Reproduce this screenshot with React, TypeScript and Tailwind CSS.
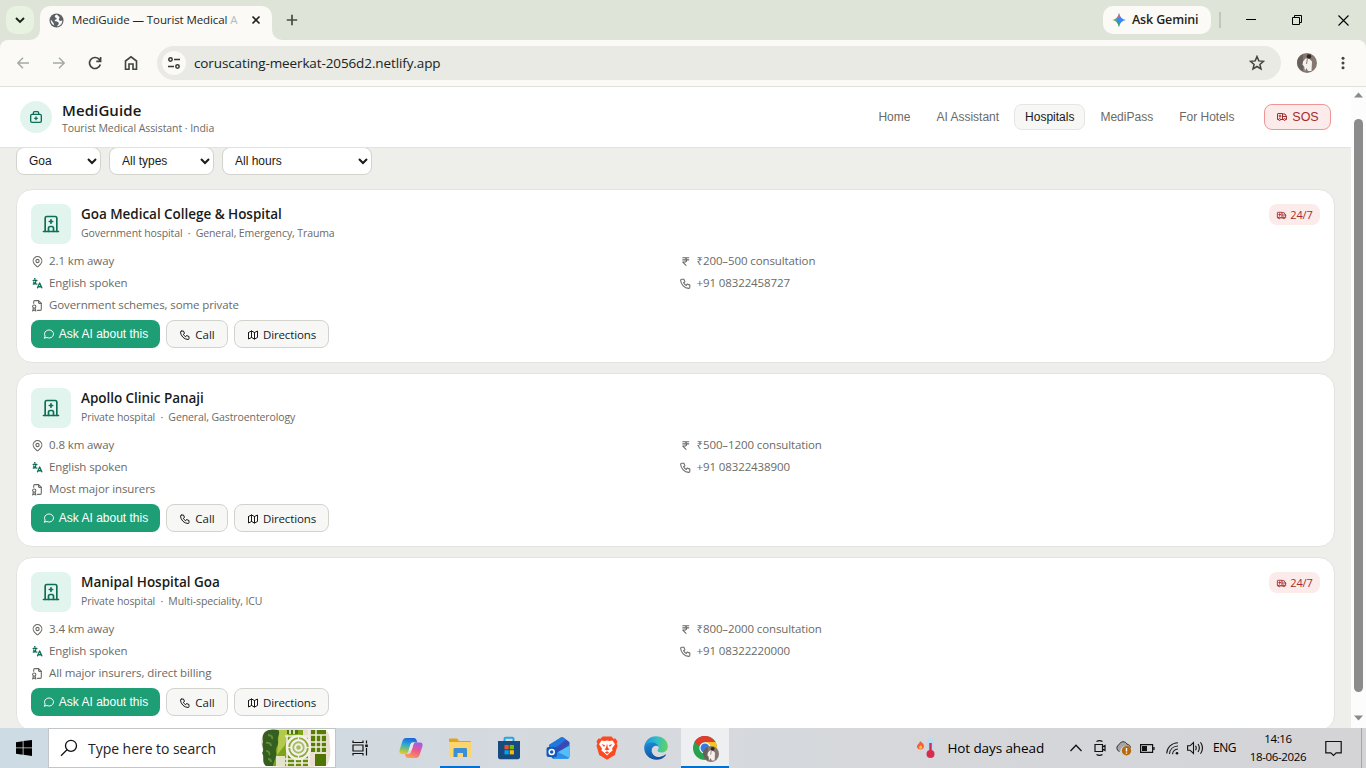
import type { ReactNode } from "react";
import {
  TbAmbulance,
  TbBuildingHospital,
  TbCurrencyRupee,
  TbFileCertificate,
  TbFirstAidKit,
  TbMap,
  TbMapPin,
  TbMessageCircle,
  TbPhone
} from "react-icons/tb";

interface Hospital {
  name: string;
  kind: string;
  specialties: string;
  distance: string;
  fee: string;
  phone: string;
  insurance: string;
  open24: boolean;
}

const hospitals: Hospital[] = [
  {
    name: "Goa Medical College & Hospital",
    kind: "Government hospital",
    specialties: "General, Emergency, Trauma",
    distance: "2.1 km away",
    fee: "₹200–500 consultation",
    phone: "+91 08322458727",
    insurance: "Government schemes, some private",
    open24: true
  },
  {
    name: "Apollo Clinic Panaji",
    kind: "Private hospital",
    specialties: "General, Gastroenterology",
    distance: "0.8 km away",
    fee: "₹500–1200 consultation",
    phone: "+91 08322438900",
    insurance: "Most major insurers",
    open24: false
  },
  {
    name: "Manipal Hospital Goa",
    kind: "Private hospital",
    specialties: "Multi-speciality, ICU",
    distance: "3.4 km away",
    fee: "₹800–2000 consultation",
    phone: "+91 08322220000",
    insurance: "All major insurers, direct billing",
    open24: true
  }
];

const navItems = ["Home", "AI Assistant", "Hospitals", "MediPass", "For Hotels"];

const LanguageIcon = () => (
  <svg
    viewBox="0 0 24 24"
    fill="none"
    stroke="currentColor"
    strokeWidth="2.4"
    strokeLinecap="round"
    strokeLinejoin="round"
    className="h-[13px] w-[13px] text-[#0f6e56]"
  >
    <path d="M9 6.4c0 4.4-2.2 6.6-5 6.6M4 6.4h7M5 9c0 2.1 2.3 3.9 6 4M12 20l4-9 4 9M19.1 18h-6.2M6.7 3l.8.6" />
  </svg>
);

const Avatar = ({ className }: { className: string }) => (
  <svg viewBox="0 0 20 20" className={className}>
    <circle cx="10" cy="10" r="10" fill="#857870" />
    <path d="M0 10a10 10 0 0 1 6-9v17a10 10 0 0 1-6-8Z" fill="#68605b" />
    <path d="M6 8.500 8.500 5.500h3.500l3 3-.5 9.500H11l-1.500-3-1.500 3-1-5-1.500-1Z" fill="#f3f1ee" />
    <circle cx="12" cy="3.500" r="2.300" fill="#342622" />
    <path d="M10.500 5.500 9.500 11" stroke="#a08a7e" strokeWidth="1.200" />
  </svg>
);

const TabStrip = () => (
  <div className="flex h-10 shrink-0 bg-[#dee4d8]">
    <div className="flex w-[30px] justify-end pl-1.5 pt-1.5">
      <button className="flex h-7 w-7 shrink-0 -mr-1 items-center justify-center rounded-[10px] bg-[#e7f3e0]">
        <svg viewBox="0 0 12 12" className="h-3 w-3" fill="none" stroke="#1c211a" strokeWidth="1.9">
          <path d="m2 4 4 4 4-4" />
        </svg>
      </button>
    </div>
    <svg viewBox="0 0 10 10" className="h-2.5 w-2.5 self-end" fill="#fbfaf6">
      <path d="M10 0v10H0A10 10 0 0 0 10 0Z" />
    </svg>
    <div className="mt-1.5 flex h-[34px] w-[232px] items-center rounded-t-[10px] bg-[#fbfaf6] pb-1.5">
      <svg viewBox="0 0 16 16" className="ml-[9px] h-[15px] w-[15px] shrink-0">
        <circle cx="8" cy="8" r="7.500" fill="#5b6066" />
        <path d="M8.500 1.500c-2 .4-2.700 1.600-2.100 2.700.5 1 1.800.6 1.800 1.800 0 1-1.400.7-1.900 1.500-.5.700 0 1.300 1 1.400 1.600.2 3.400.8 3.100 2.500-.2 1.200-1.500 1.200-1.700 2.800 3-.4 5.500-3 5.500-6.300-1.500.8-3.300.8-3.700-.6-.3-1.200 1-1.700.7-2.800-.3-1-1.500-1.300-2.700-3ZM1.800 7c-.2 2.600 1.100 5 3.400 6.200.3-1.500-.2-2.400-1-3.300C3.200 8.900 2.700 8 1.800 7Z" fill="#fbfaf6" />
      </svg>
      <div className="ml-2 w-[168px] whitespace-nowrap text-[11.500px] tracking-[-0.1px] text-[#24271f]">
        MediGuide — Tourist Medical <span className="text-[#b9bab5]">A</span>
      </div>
      <svg viewBox="0 0 10 10" className="ml-[11px] h-2.5 w-2.5 shrink-0" stroke="#23261f" strokeWidth="1.700">
        <path d="m1.500 1.500 7 7M8.500 1.500l-7 7" />
      </svg>
    </div>
    <svg viewBox="0 0 10 10" className="h-2.5 w-2.5 self-end" fill="#fbfaf6">
      <path d="M0 0v10h10A10 10 0 0 1 0 0Z" />
    </svg>
    <svg viewBox="0 0 12 12" className="ml-1 mt-3.5 h-3 w-3" stroke="#464b42" strokeWidth="1.700">
      <path d="M6 .8v10.400M.8 6h10.400" />
    </svg>
    <div className="ml-auto mr-[17px] flex items-start">
      <div className="mt-1.5 flex h-7 w-[108px] items-center rounded-[10px] bg-[#fbfaf6] pl-[9px]">
        <svg viewBox="0 0 14 14" className="h-3.5 w-3.5">
          <defs>
            <linearGradient id="gemini" x1="0" y1="0.300" x2="1" y2="0.500">
              <stop offset="0" stopColor="#f6c11a" />
              <stop offset="0.300" stopColor="#55a878" />
              <stop offset="0.450" stopColor="#3f86f6" />
              <stop offset="1" stopColor="#3186ff" />
            </linearGradient>
          </defs>
          <path d="M7 0c.8 4 3 6.200 7 7-4 .8-6.200 3-7 7-.8-4-3-6.200-7-7 4-.8 6.200-3 7-7Z" fill="url(#gemini)" />
          <path d="M7 0c.3 2 1 3.500 2 4.600L5.500 5.300C6.300 4 6.700 2.500 7 0Z" fill="#ee5a52" />
          <path d="M7 14c-.4-2-1-3.500-2-4.600l2.500-.4C7.500 11 7.400 12.500 7 14Z" fill="#35a86a" />
        </svg>
        <span className="ml-[6px] text-[12.500px] font-semibold tracking-[-0.150px] text-[#1f231c]">Ask Gemini</span>
      </div>
      <div className="ml-2 mt-3 h-4 w-0.5 bg-[#bdcab6]" />
      <svg viewBox="0 0 10 10" className="ml-[25px] mt-[15px] h-2.5 w-2.5" stroke="#000">
        <path d="M0 4.500h10" />
      </svg>
      <svg viewBox="0 0 10 10" className="ml-9 mt-[15px] h-2.5 w-2.5" fill="none" stroke="#000">
        <path d="M.5 2.500h7v7h-7zM2.500 2.500v-2h7v7h-2" />
      </svg>
      <svg viewBox="0 0 11 11" className="ml-9 mt-[15px] h-[11px] w-[11px]" stroke="#000" strokeWidth="1.100">
        <path d="m.5.500 10 10M10.500.500l-10 10" />
      </svg>
    </div>
  </div>
);

const Toolbar = () => (
  <div className="shrink-0 bg-[#dee4d8]">
    <div className="flex h-[47px] items-center rounded-t-lg border-b border-[#dfe2da] bg-[#fbfaf6] pl-[17px]">
      <svg viewBox="0 0 12 12" className="h-3 w-3" fill="none" stroke="#a6a9a2" strokeWidth="1.400">
        <path d="M12 6H1M6 .7.8 6 6 11.300" />
      </svg>
      <svg viewBox="0 0 12 12" className="ml-6 h-3 w-3" fill="none" stroke="#a6a9a2" strokeWidth="1.400">
        <path d="M0 6h11M6 .7 11.200 6 6 11.300" />
      </svg>
      <svg viewBox="0 0 14 14" className="ml-[23px] h-3.5 w-3.5" fill="none" stroke="#40453d" strokeWidth="1.700">
        <path d="M12.300 8.500A5.500 5.500 0 1 1 11 3.200l1.500 1.500M12.600 1v4.300H8.300" />
      </svg>
      <svg viewBox="0 0 14 16" className="ml-[22px] h-4 w-3.5" fill="none" stroke="#40453d" strokeWidth="1.600">
        <path d="M1.500 14.200V6L7 1.800 12.500 6v8.200H9V9H5v5.200Z" />
      </svg>
      <div className="ml-[19px] flex h-[34px] w-[1124px] items-center rounded-full bg-[#e8eae3] pl-[5px] pr-4">
        <div className="flex h-6 w-6 items-center justify-center rounded-full bg-[#fbfaf6]">
          <svg viewBox="0 0 14 14" className="h-3.5 w-3.5" fill="none" stroke="#353a32" strokeWidth="1.500">
            <circle cx="3.500" cy="3.500" r="1.700" />
            <path d="M7 3.500h6M1 10.500h6" />
            <circle cx="10.500" cy="10.500" r="1.700" />
          </svg>
        </div>
        <span className="ml-2 text-[13.500px] tracking-[-0.110px] text-[#20231d]">coruscating-meerkat-2056d2.netlify.app</span>
        <svg viewBox="0 0 16 16" className="ml-auto h-4 w-4" fill="none" stroke="#40453d" strokeWidth="1.500">
          <path d="m8 1.500 1.800 4.400 4.700.4-3.600 3.100 1.100 4.600L8 11.500 4 14l1.100-4.600-3.600-3.100 4.700-.4Z" />
        </svg>
      </div>
      <Avatar className="ml-4 h-5 w-5" />
      <svg viewBox="0 0 4 14" className="ml-6 h-3.5 w-1" fill="#40453d">
        <circle cx="2" cy="2.300" r="1.500" />
        <circle cx="2" cy="7" r="1.500" />
        <circle cx="2" cy="11.700" r="1.500" />
      </svg>
    </div>
  </div>
);

const Header = () => (
  <header className="relative z-10 flex h-[61px] shrink-0 items-center border-b border-[#e2e2de] bg-white pl-5 pr-5">
    <div className="flex h-8 w-8 items-center justify-center rounded-full bg-[#e1f5ee]">
      <TbFirstAidKit className="h-4 w-4 text-[#0f6e56]" />
    </div>
    <div className="ml-2.5 flex flex-col pt-[3px]">
      <span className="text-[15px] font-semibold leading-[19px] tracking-[0.100px] text-[#1a1a18]">MediGuide</span>
      <span className="text-[10.500px] leading-4 tracking-[-0.060px] text-[#6b6a65]">Tourist Medical Assistant · India</span>
    </div>
    <nav className="ml-auto flex items-center gap-1 font-['Liberation_Sans',Arial,sans-serif] text-xs">
      {navItems.map((item) => (
        <button
          key={item}
          className={`h-[26px] rounded-lg border px-2.5 ${
            item === "Hospitals"
              ? "border-[#e5e5e1] bg-[#f7f7f5] text-[#1a1a18]"
              : "border-transparent text-[#6b6a65]"
          }`}
        >
          {item}
        </button>
      ))}
      <button className="ml-[14.500px] flex h-[26px] w-[67px] items-center justify-center gap-1 rounded-lg border border-[#f09595] bg-[#fcebeb] text-[12.500px] text-[#a32d2d]">
        <TbAmbulance className="h-3 w-3" />
        SOS
      </button>
    </nav>
  </header>
);

const Detail = ({ icon, children }: { icon: ReactNode; children: ReactNode }) => (
  <div className="flex h-[18px] items-center gap-[5px]">
    {icon}
    <span>{children}</span>
  </div>
);

const HospitalCard = ({ hospital }: { hospital: Hospital }) => (
  <article className="rounded-2xl border border-[#e3e3df] bg-white p-3.5">
    <div className="flex items-start">
      <div className="flex h-10 w-10 items-center justify-center rounded-lg bg-[#e1f5ee]">
        <TbBuildingHospital className="h-5 w-5 text-[#0f6e56]" />
      </div>
      <div className="ml-2.5 flex flex-col">
        <span className="text-[13.500px] font-semibold leading-5 tracking-[-0.040px] text-[#1a1a18]">{hospital.name}</span>
        <span className="mt-px whitespace-pre text-[10.500px] leading-4 tracking-[-0.100px] text-[#6b6a65]">
          {hospital.kind}
          {"  ·  "}
          {hospital.specialties}
        </span>
      </div>
      {hospital.open24 && (
        <span className="ml-auto flex h-[21px] w-[51px] items-center justify-center gap-[3px] rounded-lg bg-[#fcebeb] pt-px text-[11px] tracking-[-0.150px] text-[#a32d2d]">
          <TbAmbulance className="h-[11px] w-[11px]" />
          24/7
        </span>
      )}
    </div>
    <div className="mt-2 grid grid-cols-2 gap-x-1.5 gap-y-1 text-[11.500px] tracking-[-0.110px] text-[#6b6a65]">
      <Detail icon={<TbMapPin className="h-[13px] w-[13px]" />}>{hospital.distance}</Detail>
      <Detail icon={<TbCurrencyRupee className="h-[13px] w-[13px]" />}>{hospital.fee}</Detail>
      <Detail icon={<LanguageIcon />}>English spoken</Detail>
      <Detail icon={<TbPhone className="h-[13px] w-[13px]" />}>{hospital.phone}</Detail>
      <Detail icon={<TbFileCertificate className="h-[13px] w-[13px]" />}>{hospital.insurance}</Detail>
    </div>
    <div className="mt-1.5 flex gap-1.5 text-[11.500px] text-[#1a1a18]">
      <button className="flex h-7 w-[129px] items-center justify-center gap-1 rounded-lg bg-[#1d9e75] font-['Liberation_Sans',Arial,sans-serif] text-xs text-white">
        <TbMessageCircle className="h-3 w-3" />
        Ask AI about this
      </button>
      <button className="flex h-7 w-[62px] items-center justify-center gap-1 rounded-lg border border-[#d3d3ce] bg-[#f7f7f5] pt-0.5">
        <TbPhone className="h-3 w-3" />
        Call
      </button>
      <button className="flex h-7 w-[95px] items-center justify-center gap-1 rounded-lg border border-[#d3d3ce] bg-[#f7f7f5] pt-0.5 tracking-[-0.120px]">
        <TbMap className="h-3 w-3" />
        Directions
      </button>
    </div>
  </article>
);

const Scrollbar = () => (
  <div className="flex w-[15px] shrink-0 flex-col items-center bg-[#fcfcfc] pb-[7px] pt-[5px]">
    <svg viewBox="0 0 9 6" className="h-1.5 w-[9px]" fill="#8a8a8a">
      <path d="M0 5.500 4.500.500 9 5.500Z" />
    </svg>
    <div className="mt-[21px] h-[573px] w-[9px] rounded-full bg-[#8b8b8b]" />
    <svg viewBox="0 0 9 6" className="mt-auto h-1.5 w-[9px]" fill="#8a8a8a">
      <path d="M0 .5 4.500 5.500 9 .5Z" />
    </svg>
  </div>
);

const selectClass =
  "h-7 rounded-lg border border-[#d3d3ce] bg-white px-2 font-['Liberation_Sans',Arial,sans-serif] text-xs text-[#1a1a18]";

const CopilotIcon = () => (
  <svg viewBox="0 0 24 22" className="h-[22px] w-6">
    <defs>
      <linearGradient id="copilotLeft" x1="0.500" y1="0" x2="0.300" y2="1">
        <stop offset="0" stopColor="#1e66d8" />
        <stop offset="0.400" stopColor="#26a8dc" />
        <stop offset="0.750" stopColor="#8fc35a" />
        <stop offset="1" stopColor="#f2c52f" />
      </linearGradient>
      <linearGradient id="copilotRight" x1="0.700" y1="0" x2="0.300" y2="1">
        <stop offset="0" stopColor="#a45be8" />
        <stop offset="0.500" stopColor="#ee5a87" />
        <stop offset="1" stopColor="#fba14f" />
      </linearGradient>
    </defs>
    <path d="M7 1h8c1.500 0 2.300 1 2.700 2.500l.6 2H14c-1.500 0-2.300 1-2.700 2.500l-2 6.500C8.700 16.200 8 17 6.500 17H3C.8 17 0 15.500.6 13L3.500 4C4.200 2 5.200 1 7 1Z" fill="url(#copilotLeft)" />
    <path d="M17 21H9c-1.500 0-2.300-1-2.700-2.500L6 17h3.500c1.500 0 2.300-1 2.700-2.500l2-6.500c.6-1.700 1.300-2.500 2.800-2.500h4c2.200 0 3 1.500 2.400 4L20.500 18c-.7 2-1.700 3-3.500 3Z" fill="url(#copilotRight)" />
    <path d="M11.300 8 9.500 14l3.300-1 1.500-5.500c.4-1.300 1-2 2-2H14c-1.500 0-2.300 1-2.700 2.500Z" fill="#e6e6ea" />
  </svg>
);

const ExplorerIcon = () => (
  <svg viewBox="0 0 22 20" className="h-5 w-[22px]">
    <path d="M0 1.500C0 .7.500.500 1 .5h7l2 2.500h11c.7 0 1 .3 1 1V8H0Z" fill="#e0a41c" />
    <path d="M0 4h22v14c0 .6-.4 1-1 1H1c-.6 0-1-.4-1-1Z" fill="#fcd66c" />
    <path d="M4.500 19v-7.500c0-1 .5-1.500 1.500-1.500h10.500c1 0 1.500.5 1.500 1.500V19h-4v-4H8.500v4Z" fill="#3b8ed8" />
  </svg>
);

const StoreIcon = () => (
  <svg viewBox="0 0 24 24" className="h-6 w-6">
    <path d="M7.500 7V3c0-.8.500-1.200 1.200-1.200h6.600c.7 0 1.200.4 1.200 1.200v4" fill="none" stroke="#28a5e0" strokeWidth="2" />
    <path d="M1 5h22v16c0 1.400-.8 2.200-2.200 2.200H3.200C1.800 23.200 1 22.400 1 21Z" fill="#174b7e" />
    <path d="M7.500 9h4.200v4.200H7.500Z" fill="#f25022" />
    <path d="M12.700 9h4.200v4.200h-4.200Z" fill="#7fba00" />
    <path d="M7.500 14.200h4.200v4.200H7.500Z" fill="#00a4ef" />
    <path d="M12.700 14.200h4.200v4.200h-4.200Z" fill="#ffb900" />
  </svg>
);

const OutlookIcon = () => (
  <svg viewBox="0 0 24 24" className="h-6 w-6">
    <path d="M3 9 14.500 1.800c1-.6 2-.6 3 0L23.500 6v14c0 1.700-1 2.700-2.700 2.700H7L3 19Z" fill="#2b5fc4" />
    <path d="M3 9 14.500 1.800c1-.6 2-.6 3 0L20 3.500 8 12.500H3Z" fill="#2077dc" />
    <path d="m9 13 11.500-9L23.500 7.500 12 17Z" fill="#3c46b4" />
    <path d="M23.500 9.500V20c0 1.700-1 2.700-2.700 2.700H9L12 16Z" fill="#55bdf7" />
    <path d="M12 16 23.500 22c-.6.500-1.500.7-2.700.7H7Z" fill="#2f8fe8" />
    <rect x=".5" y="11" width="10.500" height="10" rx="2" fill="#1559b7" />
    <circle cx="5.700" cy="16" r="2.500" fill="none" stroke="#fff" strokeWidth="1.500" />
  </svg>
);

const BraveIcon = () => (
  <svg viewBox="0 0 22 24" className="h-6 w-[22px]">
    <path d="M6.500.500h9l2 2.200 2-.2 2 3-.8 2 .8 2.200-2.700 9.300L11 23.700 3.200 19 .5 9.700l.8-2.200-.8-2 2-3 2 .2Z" fill="#fb4a21" />
    <path d="m5.500 4.500 3 .5L11 4.500l2.500.500 3-.5 2.500 3.800-3 4.200.6 2-3.100 2.500L11 19.500 8.500 17l-3.100-2.500.6-2-3-4.200Z" fill="#fff" />
    <path d="m5.500 8.300 3.500.6-.8 2.100ZM16.500 8.300l-3.500.6.8 2.100ZM11 7.500l1 4.500 1.700 1.300L11 14.600l-2.700-1.300L10 12ZM8.800 16.300 11 15.200l2.200 1.100L11 18Z" fill="#fb4a21" />
  </svg>
);

const EdgeIcon = () => (
  <svg viewBox="0 0 24 24" className="h-6 w-6">
    <defs>
      <linearGradient id="edgeTop" x1="0" y1="0.400" x2="1" y2="0.500">
        <stop offset="0" stopColor="#1c93dd" />
        <stop offset="0.500" stopColor="#2cbfc9" />
        <stop offset="1" stopColor="#62d35a" />
      </linearGradient>
      <linearGradient id="edgeSide" x1="0.300" y1="0" x2="0.600" y2="1">
        <stop offset="0" stopColor="#1b87d4" />
        <stop offset="1" stopColor="#124d9b" />
      </linearGradient>
    </defs>
    <path d="M.2 11C.8 4.800 5.800.200 12 .2c6.800 0 11.800 4.500 11.800 10.300 0 3.500-2.500 6-6 6-2.700 0-4.300-1-4.300-2 0-.7 1.200-1.200 1.200-3 0-2.500-2.500-4.500-6-4.500C5 7 1.800 8.500.2 11Z" fill="url(#edgeTop)" />
    <path d="M.2 12c0-3.500 3.800-5.500 8-5.500 3.500 0 6.500 2 6.500 5-.3-1.300-1.600-2-2.900-1.800-3.300.5-4.800 3.500-3.800 6.800.9 3 4 5 7.500 4.500 2.300-.3 4.300-1.400 5.300-2.200.8-.6 1.400-.1.900.8-2 2.800-5.400 4.200-9.200 4.200C5.500 23.800.2 18.500.2 12Z" fill="url(#edgeSide)" />
  </svg>
);

const ChromeIcon = () => (
  <div className="relative h-6 w-6">
    <svg viewBox="0 0 24 24" className="h-6 w-6">
      <circle cx="12" cy="12" r="12" fill="#27a34f" />
      <path d="M12 12 1.600 6A12 12 0 0 1 22.400 6Z" fill="#e33b2e" />
      <path d="M12 6h10.400A12 12 0 0 1 12 24l5.200-9Z" fill="#fcc31e" />
      <path d="M1.600 6 6.800 15 12 12V6Z" fill="#27a34f" />
      <path d="M1.600 6A12 12 0 0 1 12 0v6a6 6 0 0 0-5 3.500L5.200 10Z" fill="#e33b2e" />
      <circle cx="12" cy="12" r="5.700" fill="#fff" />
      <circle cx="12" cy="12" r="4.500" fill="#3779e3" />
    </svg>
    <Avatar className="absolute -bottom-0.5 -right-0.5 h-4 w-4" />
  </div>
);

const taskApps = [
  { id: "copilot", icon: <CopilotIcon />, state: "" },
  { id: "explorer", icon: <ExplorerIcon />, state: "open" },
  { id: "store", icon: <StoreIcon />, state: "" },
  { id: "outlook", icon: <OutlookIcon />, state: "" },
  { id: "brave", icon: <BraveIcon />, state: "" },
  { id: "edge", icon: <EdgeIcon />, state: "" },
  { id: "chrome", icon: <ChromeIcon />, state: "active" }
];

const SearchArt = () => (
  <svg viewBox="0 0 70 38" className="h-[38px] w-[70px]">
    <path d="M4 2c8-3 50-2 62 0 4 5 2 9 3 15s0 15-3 19c-12 3-50 2-61 1C1 31 3 24 1 18S1 6 4 2Z" fill="#e9dfcf" />
    <path d="M10 1h32v36H8Z" fill="#7da318" />
    <path d="M18 1h10L24 16l-8 10Z" fill="#b3c94c" />
    <path d="M4 3C7 0 13 0 17 1c3 3-1 6 0 11s-3 6-2 11-2 8-3 14H5c-5-4-1-9-4-13 3-4-1-7 1-11-1-5 0-8 2-10Z" fill="#355f20" />
    <path d="M7 6c3 0 5 2 4 4M5 14c3-1 5 1 5 3M5 22c3 0 4 2 3 4M7 30c2 0 3 1 3 3" fill="none" stroke="#638b35" strokeWidth="2" />
    <path d="M15 27h9v10h-9Z" fill="#e4e5c8" />
    <path d="M25 9h22v28H25Z" fill="#638a0d" />
    <path d="M26 1h11v4H26Z" fill="#4f7413" />
    <path d="M29 1v4M33 1v4M24 7h25M24 30h25M26 7v30M48 0v37M24 34h24M34 30v7M41 30v7" stroke="#f2eee2" strokeWidth="1.700" />
    <path d="M50 1h15v22H50Z" fill="#557e02" />
    <path d="M50 6h15M50 13h15M50 18h15M55 1v22M60 6v17" stroke="#f2eee2" strokeWidth="1.500" />
    <path d="M54 25h11v12H54Z" fill="#4d7500" />
    <circle cx="37.500" cy="18.500" r="11.500" fill="#88aa39" stroke="#f5f0e7" strokeWidth="2.500" />
    <path d="M37.500 7v23M26 18.500h23" stroke="#f5f0e7" strokeWidth="1.200" />
    <circle cx="37.500" cy="18.500" r="7.300" fill="#a5bd62" stroke="#f5f0e7" strokeWidth="2.300" />
    <circle cx="37.500" cy="18.500" r="3.300" fill="#a5bd62" stroke="#f5f0e7" strokeWidth="2" />
  </svg>
);

const Taskbar = () => (
  <footer className="flex h-10 shrink-0 items-center bg-gradient-to-r from-[#cddbe4] via-[#d6d9dd] to-[#d4d4d7] text-black">
    <div className="flex w-12 justify-center">
      <svg viewBox="0 0 16 16" className="h-4 w-4">
        <path d="M0 2.200 6.700 1.200v6.300H0ZM7.500 1.100 16 0v7.500H7.500ZM0 8.300h6.700v6.400L0 13.800ZM7.500 8.300H16V16l-8.500-1.200Z" />
      </svg>
    </div>
    <div className="flex h-10 w-[288px] items-center border border-[#c3c6c8] bg-white pl-[11px]">
      <svg viewBox="0 0 18 18" className="h-[18px] w-[18px]" fill="none" stroke="#111" strokeWidth="1.300">
        <circle cx="11" cy="6.800" r="5.500" />
        <path d="M7 10.800 1 16.800" />
      </svg>
      <span className="ml-2.5 text-[14px] tracking-[-0.040px] text-[#222]">Type here to search</span>
      <div className="ml-auto mr-[4px]">
        <SearchArt />
      </div>
    </div>
    <div className="mr-0.5 flex w-[49px] justify-center">
      <svg viewBox="0 0 17 16" className="h-4 w-[17px]" fill="none" stroke="#111" strokeWidth="1.200">
        <path d="M1 .5v2h10v-2M1 5h10v6H1ZM1 15.500v-2h10v2M14.500.500v3M14.500 8v7.500" />
        <path d="M13.200 4.500h2.600v2.600h-2.600Z" fill="#111" stroke="none" />
      </svg>
    </div>
    <div className="flex gap-px">
      {taskApps.map((app) => (
        <div
          key={app.id}
          className={`flex h-10 w-12 flex-col items-center ${app.state === "active" ? "bg-[#eeeff1]" : ""}`}
        >
          <div className="flex h-[38px] items-center pt-0.5">{app.icon}</div>
          {app.state === "open" && <div className="h-0.5 w-10 bg-[#0071d0]" />}
          {app.state === "active" && <div className="h-0.5 w-12 bg-[#0071d0]" />}
        </div>
      ))}
    </div>
    <div className="ml-auto flex items-center">
      <svg viewBox="0 0 20 22" className="h-[22px] w-5">
        <path d="M4 4c2 1.500 4 3 4 5.300C8 11.200 6.600 12.500 4.500 12.500S1 11.200 1 9.400C1 7.500 3.700 6.800 4 4Z" fill="#f2603a" />
        <path d="M4.700 8c1 1 1.500 1.500 1.500 2.300 0 .9-.7 1.500-1.600 1.500-1 0-1.600-.6-1.600-1.500 0-.8 1.500-1.200 1.700-2.300Z" fill="#ffc04a" />
        <rect x="11.500" y="1" width="6" height="16" rx="3" fill="#b9dcf4" />
        <circle cx="14.500" cy="17" r="4" fill="#d92c4c" />
        <path d="M14.500 6v11" stroke="#d92c4c" strokeWidth="2.500" />
      </svg>
      <span className="ml-[11px] text-[13.500px] tracking-[-0.100px]">Hot days ahead</span>
      <svg viewBox="0 0 12 8" className="ml-[26px] h-2 w-3" fill="none" stroke="#111" strokeWidth="1.300">
        <path d="m.5 7 5.500-5.700L11.500 7" />
      </svg>
      <svg viewBox="0 0 12 16" className="ml-3 h-4 w-3" fill="none" stroke="#111" strokeWidth="1.200">
        <path d="M2.500 1.500Q5.500-.2 8.500 1.500M2.500 14.500q3 1.700 6 0M1 4.500h7.500v7H1ZM8.500 7l2.500-1.500v5L8.500 9" />
      </svg>
      <svg viewBox="0 0 17 16" className="ml-[9px] h-4 w-[17px]">
        <path d="M4.500 11.500a3.700 3.700 0 0 1-.3-7C5.500 1 10.500.8 12 4.200c2.500.3 3.500 2 3.500 3.500" fill="#a4a6a9" stroke="#333" />
        <path d="M6 11.500c0-3.500 2-5 5-5" fill="none" stroke="#eee" />
        <circle cx="11.500" cy="10.700" r="4.700" fill="#b66a0d" />
        <path d="M11.500 8v3.500M11.500 12.500v1.300" stroke="#fff" strokeWidth="1.400" />
      </svg>
      <svg viewBox="0 0 15 9" className="ml-[8px] h-[9px] w-[15px]" fill="none" stroke="#111" strokeWidth="1.200">
        <path d="M.6.600h12v7.800H.6ZM14 3v3" />
        <path d="M2 2h5v5H2Z" fill="#111" stroke="none" />
      </svg>
      <svg viewBox="0 0 13 13" className="ml-[11px] h-[13px] w-[13px]" fill="none" stroke="#222" strokeWidth="1.100">
        <path d="M.7 11.500C1 5.500 5.500 1 12 .8M3.500 12C3.800 7.500 7 4.200 12 4M6.500 12.300C6.700 9.500 8.700 7.300 12 7" />
        <circle cx="11" cy="11.300" r="1.300" fill="#111" stroke="none" />
      </svg>
      <svg viewBox="0 0 17 14" className="ml-2 h-3.5 w-[17px]" fill="none" stroke="#111" strokeWidth="1.100">
        <path d="M.6 4.800H3L6.500 1.500v11L3 9.200H.6ZM8.500 4.800q1.500 2.200 0 4.400M11 3q2.700 4 0 8M13.500 1.300q4 5.700 0 11.400" />
      </svg>
      <span className="ml-[9px] text-[12px] tracking-[-0.500px]">ENG</span>
      <div className="ml-[13px] flex w-[58px] flex-col items-center text-[11.500px] leading-[18px] tracking-[-0.350px]">
        <span>14:16</span>
        <span>18-06-2026</span>
      </div>
      <svg viewBox="0 0 17 17" className="ml-[18px] h-[17px] w-[17px]" fill="none" stroke="#111" strokeWidth="1.200">
        <path d="M.8 1.500h15.400v11.300h-5L8.500 15.500l-2.700-2.700h-5Z" />
      </svg>
      <div className="ml-[19px] mr-1 h-10 w-px bg-[#a4a7aa]" />
    </div>
  </footer>
);

export default function App() {
  return (
    <div className="flex h-screen w-screen flex-col overflow-hidden font-['Open_Sans','Noto_Sans',sans-serif]">
      <TabStrip />
      <Toolbar />
      <div className="flex min-h-0 flex-1">
        <div className="flex min-w-0 flex-1 flex-col overflow-hidden bg-[#eeefea]">
          <Header />
          <main className="-mt-px pl-4 pr-4">
            <div className="flex gap-2">
              <select className={`${selectClass} w-[85px]`}>
                <option>Goa</option>
              </select>
              <select className={`${selectClass} w-[105px]`}>
                <option>All types</option>
              </select>
              <select className={`${selectClass} w-[150px]`}>
                <option>All hours</option>
              </select>
            </div>
            <div className="mt-3.5 flex flex-col gap-2.5">
              {hospitals.map((hospital) => (
                <HospitalCard key={hospital.name} hospital={hospital} />
              ))}
            </div>
          </main>
        </div>
        <Scrollbar />
      </div>
      <Taskbar />
    </div>
  );
}
